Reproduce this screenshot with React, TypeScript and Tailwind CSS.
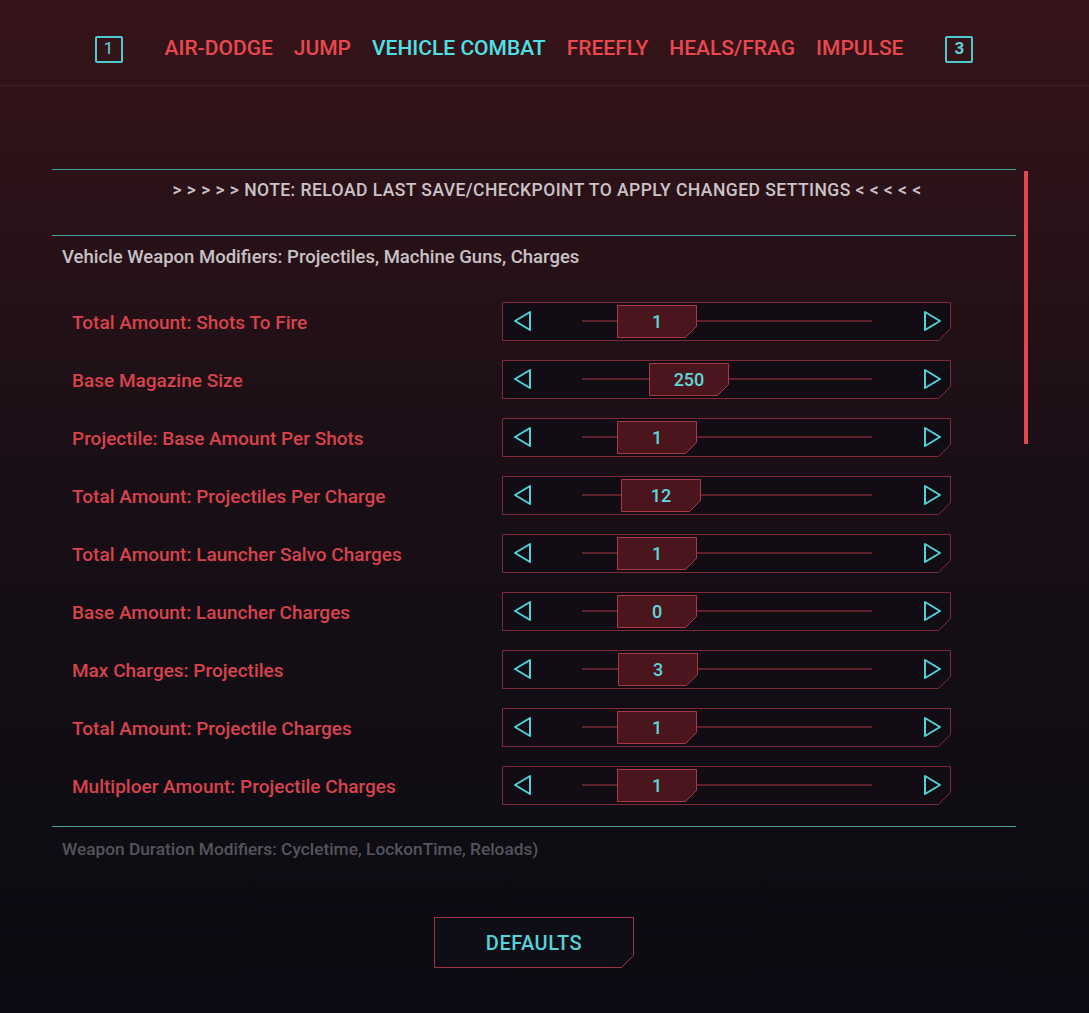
import React from 'react';

interface SliderRow {
    label: string;
    value: number;
    thumbLeft: number;
}

const rows: SliderRow[] = [
    { label: 'Total Amount: Shots To Fire', value: 1, thumbLeft: 115 },
    { label: 'Base Magazine Size', value: 250, thumbLeft: 147 },
    { label: 'Projectile: Base Amount Per Shots', value: 1, thumbLeft: 115 },
    { label: 'Total Amount: Projectiles Per Charge', value: 12, thumbLeft: 119 },
    { label: 'Total Amount: Launcher Salvo Charges', value: 1, thumbLeft: 115 },
    { label: 'Base Amount: Launcher Charges', value: 0, thumbLeft: 115 },
    { label: 'Max Charges: Projectiles', value: 3, thumbLeft: 116 },
    { label: 'Total Amount: Projectile Charges', value: 1, thumbLeft: 115 },
    { label: 'Multiploer Amount: Projectile Charges', value: 1, thumbLeft: 115 },
];

const tabs = ['AIR-DODGE', 'JUMP', 'VEHICLE COMBAT', 'FREEFLY', 'HEALS/FRAG', 'IMPULSE'];

const font = { fontFamily: 'Roboto, "Liberation Sans", sans-serif' };

const ArrowLeft = () => (
    <svg width="22" height="24" viewBox="0 0 22 24" fill="none">
        <path d="M18 3 L3 12 L18 21 Z" stroke="#4fd3d6" strokeWidth="2" strokeLinejoin="round" />
    </svg>
);

const ArrowRight = () => (
    <svg width="22" height="24" viewBox="0 0 22 24" fill="none">
        <path d="M4 3 L19 12 L4 21 Z" stroke="#4fd3d6" strokeWidth="2" strokeLinejoin="round" />
    </svg>
);

const Slider: React.FC<{ value: number; thumbLeft: number }> = ({ value, thumbLeft }) => (
    <div className="relative w-[449px] h-[39px]">
        <svg className="absolute inset-0" width="449" height="39" viewBox="0 0 449 39">
            <path d="M0.5 0.5 H448.5 V26.5 L436.5 38.5 H0.5 Z" fill="#120c14" stroke="#7e2b37" strokeWidth="1" />
        </svg>
        <div className="absolute left-[10px] top-[7px]">
            <ArrowLeft />
        </div>
        <div className="absolute right-[8px] top-[7px]">
            <ArrowRight />
        </div>
        <div className="absolute left-[80px] top-[18px] w-[290px] h-[2px] bg-[#5e222c]"></div>
        <div className="absolute top-[3px] w-[80px] h-[33px]" style={{ left: thumbLeft }}>
            <svg className="absolute inset-0" width="80" height="33" viewBox="0 0 80 33">
                <path d="M0.5 0.5 H79.5 V21.5 L68.5 32.5 H0.5 Z" fill="#4b151e" stroke="#a83a47" strokeWidth="1" />
            </svg>
            <div className="relative h-full flex items-center justify-center text-[18px] font-medium text-[#5ed6da]">
                {value}
            </div>
        </div>
    </div>
);

const App: React.FC = () => {
    return (
        <div className="w-[1089px] h-[1013px] overflow-hidden bg-gradient-to-b from-[#361419] via-[#180e16] to-[#0a0b12]" style={font}>
            <div className="h-[86px] border-b border-[#4a1d24]">
                <div className="w-[964px] ml-[52px] h-full flex items-center justify-center pt-[13px]">
                    <div className="w-[28px] h-[27px] border-2 border-[#4fc9cd] rounded-[2px] flex items-center justify-center text-[17px] text-[#5ed6da]">1</div>
                    <div className="flex items-center gap-[21px] mx-[42px]">
                        {tabs.map((t) => (
                            <span
                                key={t}
                                className={`text-[21px] font-medium ${t === 'VEHICLE COMBAT' ? 'text-[#4fe0e6]' : 'text-[#e9484f]'}`}
                            >
                                {t}
                            </span>
                        ))}
                    </div>
                    <div className="w-[28px] h-[27px] border-2 border-[#4fc9cd] rounded-[2px] flex items-center justify-center text-[17px] font-bold text-[#5ed6da]">3</div>
                </div>
            </div>

            <div className="flex pl-[52px] mt-[83px]">
                <div className="w-[964px]">
                    <div className="border-t border-b border-[#43a09d] h-[67px] pt-[9px] flex justify-center pl-[26px] text-[17.5px] leading-[22px] font-medium text-[#cbc3c7] tracking-[0.45px]">
                        {'> > > > > NOTE: RELOAD LAST SAVE/CHECKPOINT TO APPLY CHANGED SETTINGS < < < < <'}
                    </div>
                    <div className="h-[56px] pt-[10px] pl-[10px] text-[18.5px] leading-[22px] font-medium text-[#c9c1c5]">
                        Vehicle Weapon Modifiers: Projectiles, Machine Guns, Charges
                    </div>
                    <div className="flex flex-col">
                        {rows.map((r) => (
                            <div key={r.label} className="h-[58px] flex items-center">
                                <div className="w-[450px] pl-[20px] pt-[3px] text-[19px] leading-[24px] font-medium text-[#d8434c]">{r.label}</div>
                                <Slider value={r.value} thumbLeft={r.thumbLeft} />
                            </div>
                        ))}
                    </div>
                    <div className="mt-[12px] border-t border-[#43a09d] h-[44px] pt-[11px] pl-[10px] text-[17.3px] leading-[22px] font-medium text-[#55545d]">
                        Weapon Duration Modifiers: Cycletime, LockonTime, Reloads)
                    </div>
                </div>
                <div className="ml-[8px] mt-[2px] w-[4px] h-[273px] bg-[#e4464d]"></div>
            </div>

            <div className="w-[964px] ml-[52px] flex justify-center mt-[47px]">
                <div className="relative w-[200px] h-[51px] flex items-center justify-center">
                    <svg className="absolute inset-0" width="200" height="51" viewBox="0 0 200 51">
                        <path d="M0.5 0.5 H199.5 V38.5 L187.5 50.5 H0.5 Z" fill="#0f0d16" stroke="#9a3541" strokeWidth="1" />
                    </svg>
                    <span className="relative text-[20px] font-medium tracking-[0.5px] text-[#55d3d8]">DEFAULTS</span>
                </div>
            </div>
        </div>
    );
};

export default App;
